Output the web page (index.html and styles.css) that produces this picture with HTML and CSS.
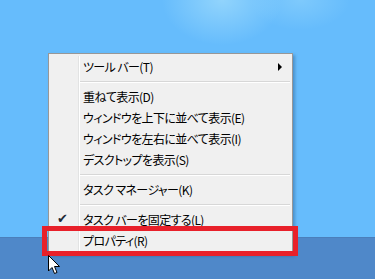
FILE: index.html
```html
<!DOCTYPE html>
<html lang="ja">
<head>
<meta charset="utf-8">
<link rel="stylesheet" href="styles.css">
</head>
<body>
<div class="screen">
  <div class="desktop">
    <div class="menu">
      <div class="gutter-line"></div>
      <div class="item has-sub"><span class="label">ツール バー(T)</span><span class="arrow"></span></div>
      <div class="sep"></div>
      <div class="item"><span class="label">重ねて表示(D)</span></div>
      <div class="item"><span class="label">ウィンドウを上下に並べて表示(E)</span></div>
      <div class="item"><span class="label">ウィンドウを左右に並べて表示(I)</span></div>
      <div class="item"><span class="label">デスクトップを表示(S)</span></div>
      <div class="sep"></div>
      <div class="item"><span class="label">タスク マネージャー(K)</span></div>
      <div class="sep"></div>
      <div class="item checked"><span class="check">✔</span><span class="label">タスク バーを固定する(L)</span></div>
      <div class="item"><span class="label">プロパティ(R)</span></div>
    </div>
    <div class="highlight"></div>
    <svg class="cursor" width="14" height="22" viewBox="0 0 14 22">
      <path d="M1.5 1.5 L1.5 17 L5 13.5 L7.5 19.5 L10 18.5 L7.5 12.5 L12.5 12.5 Z" fill="#fff" stroke="#000" stroke-width="1" stroke-linejoin="miter"/>
    </svg>
  </div>
  <div class="taskbar"></div>
</div>
</body>
</html>
```

FILE: styles.css
```css
html, body {
  margin: 0;
  padding: 0;
}
body {
  width: 375px;
  height: 279px;
  overflow: hidden;
  font-family: "Noto Sans CJK JP", "Noto Sans", sans-serif;
}
.screen {
  width: 375px;
  height: 279px;
  display: flex;
  flex-direction: column;
}
.desktop {
  position: relative;
  flex: 1;
  background:
    radial-gradient(ellipse 60px 45px at 222px 0px, rgba(160, 220, 252, 0.75), rgba(160, 220, 252, 0) 100%),
    radial-gradient(ellipse 50px 30px at 300px 0px, rgba(150, 215, 252, 0.5), rgba(150, 215, 252, 0) 100%),
    #66bcfc;
}
.taskbar {
  height: 41px;
  background: #4f88c9;
  border-top: 1px solid #4a7fbb;
}
.menu {
  position: absolute;
  left: 48px;
  top: 53px;
  width: 243px;
  padding: 2px 0;
  background: #f0f0f0;
  border: 1px solid #979797;
  box-shadow: 2px 2px 3px rgba(20, 60, 110, 0.35);
}
.gutter-line {
  position: absolute;
  left: 29px;
  top: 2px;
  bottom: 2px;
  width: 1px;
  background: #e2e3e3;
  border-right: 1px solid #ffffff;
}
.item {
  position: relative;
  height: 21px;
  display: flex;
  align-items: center;
  padding-left: 34px;
  font-size: 12px;
  color: #000;
  font-feature-settings: "palt";
  letter-spacing: -0.6px;
}
.label {
  white-space: nowrap;
  line-height: 1;
}
.arrow {
  position: absolute;
  right: 10px;
  top: 7px;
  width: 0;
  height: 0;
  border-left: 4px solid #000;
  border-top: 4px solid transparent;
  border-bottom: 4px solid transparent;
}
.check {
  position: absolute;
  left: 8px;
  top: 2px;
  font-size: 13px;
  color: #1e2a36;
  letter-spacing: 0;
  font-family: "DejaVu Sans", sans-serif;
}
.sep {
  height: 1px;
  margin: 4px 2px 3px 31px;
  background: #d7d7d7;
  border-bottom: 1px solid #ffffff;
}
.highlight {
  position: absolute;
  left: 42px;
  top: 226px;
  width: 246px;
  height: 20px;
  border: 5px solid #e8202a;
}
.cursor {
  position: absolute;
  left: 47px;
  top: 254px;
}
```
